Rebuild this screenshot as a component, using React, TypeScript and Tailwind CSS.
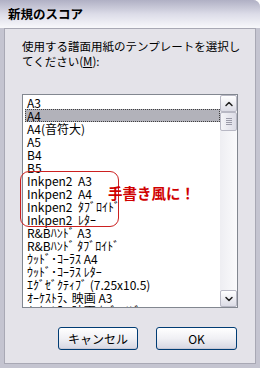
import { ChevronUp, ChevronDown } from 'lucide-react';

const items = [
  'A3',
  'A4',
  'A4(音符大)',
  'A5',
  'B4',
  'B5',
  'Inkpen2  A3',
  'Inkpen2  A4',
  'Inkpen2  ﾀﾌﾞﾛｲﾄﾞ',
  'Inkpen2  ﾚﾀｰ',
  'R&Bﾊﾝﾄﾞ A3',
  'R&Bﾊﾝﾄﾞ ﾀﾌﾞﾛｲﾄﾞ',
  'ｳｯﾄﾞ･ｺｰﾗｽ A4',
  'ｳｯﾄﾞ･ｺｰﾗｽ ﾚﾀｰ',
  'ｴｸﾞｾﾞｸﾃｨﾌﾞ (7.25x10.5)',
  'ｵｰｹｽﾄﾗ､ 映画 A3',
  'ｵｰｹｽﾄﾗ､ 映画 ﾀﾌﾞﾛｲﾄﾞ',
];

const font = { fontFamily: '"Noto Sans CJK JP", "Liberation Sans", sans-serif' };

const XpButton = ({ label, width }: { label: string; width: string }) => (
  <button
    type="button"
    className={`${width} h-[23px] rounded-[3px] border border-[#003c74] bg-gradient-to-b from-[#ffffff] via-[#f0f0f4] to-[#d6d6e2] text-[12px] text-black shadow-[inset_0_-1px_0_#c8c8d4]`}
  >
    {label}
  </button>
);

const App = () => {
  return (
    <div
      className="relative flex h-[368px] w-[260px] flex-col overflow-hidden rounded-tr-[7px] bg-[#c4c4d0]"
      style={font}
    >
      <div className="flex h-[28px] items-center bg-gradient-to-b from-[#b0b0c4] via-[#dcdce8] to-[#f8f8fb] pl-[8px] text-[12.5px] font-bold leading-none text-black">
        新規のスコア
      </div>
      <div className="mx-[4px] mb-[4px] flex flex-1 flex-col border border-[#a8a8b4] bg-[#e4e3e9] px-[17px] pt-[10px]">
        <p className="whitespace-nowrap text-[11.5px] leading-[15px] text-black">
          使用する譜面用紙のテンプレートを選択し
          <br />
          てください(<span className="underline">M</span>):
        </p>
        <div className="mt-[25px] flex h-[214px] border border-[#828790] bg-white">
          <ul className="flex-1 overflow-hidden pl-[2px] pt-[1px] text-[12px] leading-[13px] text-black">
            {items.map((item, i) => (
              <li
                key={item}
                className={
                  i === 1
                    ? 'h-[13px] whitespace-pre border border-dotted border-[#404040] bg-[#b2b2ba] pl-[1px] leading-[11px]'
                    : 'h-[13px] whitespace-pre pl-[2px]'
                }
              >
                {item}
              </li>
            ))}
          </ul>
          <div className="flex w-[17px] flex-col bg-gradient-to-r from-[#eeeef2] to-[#fafafc]">
            <div className="flex h-[17px] items-center justify-center rounded-[2px] border border-[#b8b8c4] bg-gradient-to-b from-white to-[#dcdce6] text-[#202020]">
              <ChevronUp size={12} strokeWidth={3} />
            </div>
            <div className="flex h-[19px] flex-col items-center justify-center gap-[1px] rounded-[2px] border border-[#b8b8c4] bg-gradient-to-r from-[#f4f4f8] to-[#dcdce6]">
              <span className="h-px w-[6px] bg-[#9a9aa8]" />
              <span className="h-px w-[6px] bg-[#9a9aa8]" />
              <span className="h-px w-[6px] bg-[#9a9aa8]" />
              <span className="h-px w-[6px] bg-[#9a9aa8]" />
            </div>
            <div className="flex-1" />
            <div className="flex h-[17px] items-center justify-center rounded-[2px] border border-[#b8b8c4] bg-gradient-to-b from-white to-[#dcdce6] text-[#202020]">
              <ChevronDown size={12} strokeWidth={3} />
            </div>
          </div>
        </div>
        <div className="mt-[19px] flex justify-end gap-[18px] pr-[1px]">
          <XpButton label="キャンセル" width="w-[80px]" />
          <XpButton label="OK" width="w-[81px]" />
        </div>
      </div>
      <div className="pointer-events-none absolute left-[20px] top-[171px] h-[56px] w-[99px] rounded-[9px] border border-[#cc2020]" />
      <div className="absolute left-[108px] top-[186px] text-[14.5px] font-bold leading-none text-[#d00000]">
        手書き風に！
      </div>
    </div>
  );
};

export default App;
